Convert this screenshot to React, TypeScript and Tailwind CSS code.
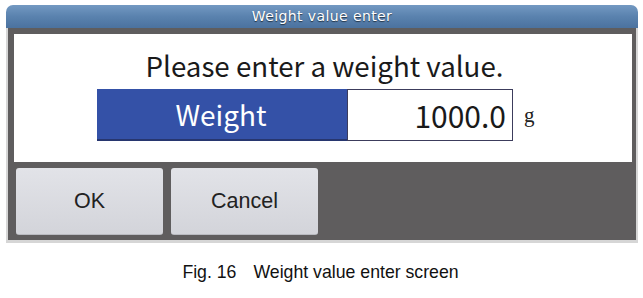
export default function App() {
  return (
    <div className="w-[643px] h-[298px] bg-white overflow-hidden">
      <div className="ml-[6px] pt-[5px] w-[632px]">
        {/* title bar */}
        <div
          className="h-[23px] rounded-t-[7px] bg-gradient-to-b from-[#7399c2] via-[#5a82ae] to-[#4b729f] flex items-center justify-center text-white text-[14px] tracking-[0.4px] [text-shadow:0_1px_1px_rgba(0,0,0,0.6)]"
          style={{ fontFamily: '"DejaVu Sans", sans-serif' }}
        >
          Weight value enter
        </div>
        {/* frame */}
        <div className="border-x-2 border-b-[3px] border-[#d6d6d6]">
          <div className="bg-[#5f5d5e] pt-[6px] pl-[6px] pr-[4px] pb-[5px]">
            <div
              className="bg-white h-[128px] flex flex-col"
              style={{ fontFamily: '"Noto Sans CJK JP", "Noto Sans", sans-serif' }}
            >
              <div className="mt-[13px] text-center text-[27.7px] leading-[37px] text-[#1a1a1a] pl-[3px]">
                Please enter a weight value.
              </div>
              <div className="mt-[5px] flex items-center pl-[83px]">
                <div className="w-[250px] h-[52px] bg-[#3451a7] border-b-2 border-[#27366f] flex items-center justify-center text-white text-[28px] pr-[2px]">
                  Weight
                </div>
                <div className="w-[166px] h-[52px] border-[1.5px] border-[#3c3c5c] flex items-center justify-end pr-[6px] text-[30px] text-[#1a1a1a]">
                  1000.0
                </div>
                <div
                  className="ml-[11px] text-[21px] text-[#222] mt-[2px]"
                  style={{ fontFamily: '"Liberation Serif", serif' }}
                >
                  g
                </div>
              </div>
            </div>
            <div className="mt-[6px] pl-[2px] flex gap-[8px]">
              <button
                className="w-[147px] h-[67px] rounded-[3px] bg-gradient-to-b from-[#e2e3e8] to-[#d3d4da] border-b border-[#b9bac0] text-[21.5px] text-[#222]"
                style={{ fontFamily: '"Liberation Sans", Arial, sans-serif' }}
              >
                OK
              </button>
              <button
                className="w-[147px] h-[67px] rounded-[3px] bg-gradient-to-b from-[#e2e3e8] to-[#d3d4da] border-b border-[#b9bac0] text-[21.5px] text-[#222]"
                style={{ fontFamily: '"Liberation Sans", Arial, sans-serif' }}
              >
                Cancel
              </button>
            </div>
          </div>
        </div>
      </div>
      <div
        className="mt-[16px] text-center text-[17.7px] text-[#111] pr-[2px]"
        style={{ fontFamily: '"Liberation Sans", Arial, sans-serif' }}
      >
        Fig. 16<span className="inline-block w-[17px]" />Weight value enter screen
      </div>
    </div>
  );
}
